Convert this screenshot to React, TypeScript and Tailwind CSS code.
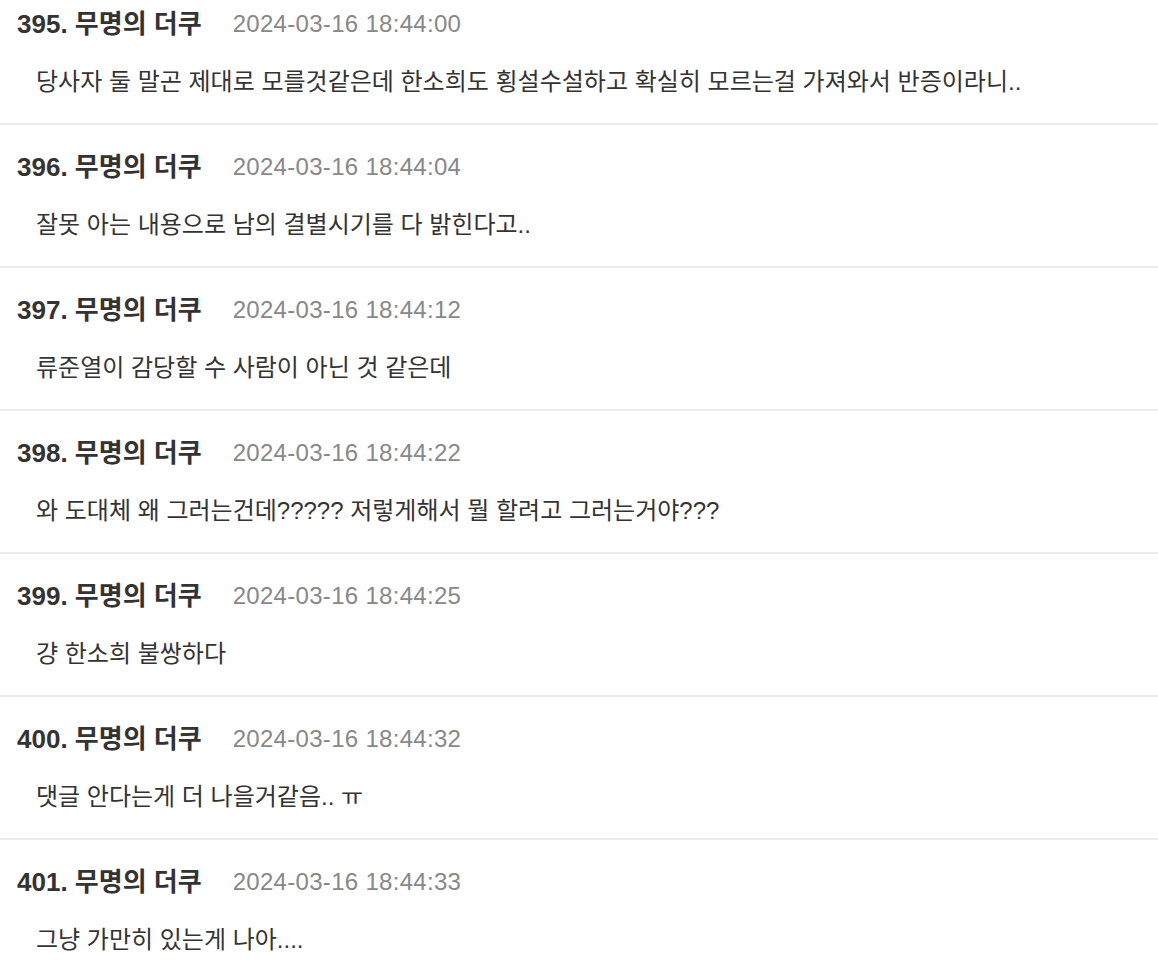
const comments = [
  { no: 395, time: '2024-03-16 18:44:00', body: '당사자 둘 말곤 제대로 모를것같은데 한소희도 횡설수설하고 확실히 모르는걸 가져와서 반증이라니..' },
  { no: 396, time: '2024-03-16 18:44:04', body: '잘못 아는 내용으로 남의 결별시기를 다 밝힌다고..' },
  { no: 397, time: '2024-03-16 18:44:12', body: '류준열이 감당할 수 사람이 아닌 것 같은데' },
  { no: 398, time: '2024-03-16 18:44:22', body: '와 도대체 왜 그러는건데????? 저렇게해서 뭘 할려고 그러는거야???' },
  { no: 399, time: '2024-03-16 18:44:25', body: '걍 한소희 불쌍하다' },
  { no: 400, time: '2024-03-16 18:44:32', body: '댓글 안다는게 더 나을거같음.. ㅠ' },
  { no: 401, time: '2024-03-16 18:44:33', body: '그냥 가만히 있는게 나아....' },
];

export default function App() {
  return (
    <div
      className="h-[974px] overflow-hidden bg-white"
      style={{ fontFamily: '"Liberation Sans", "Noto Sans CJK KR", sans-serif' }}
    >
      <ul className="-mt-[18px]">
        {comments.map((c) => (
          <li key={c.no} className="border-b-2 border-[#ececec] px-[17px] pt-[24px] pb-[23px]">
            <div className="flex items-center h-[36px]">
              <span className="text-[26px] font-bold text-[#333333]">
                {c.no}. 무명의 더쿠
              </span>
              <span className="ml-[31px] text-[24px] tracking-[0.3px] text-[#888888]">{c.time}</span>
            </div>
            <p className="mt-[22px] h-[36px] leading-[36px] pl-[19px] text-[24px] text-[#333333]">{c.body}</p>
          </li>
        ))}
      </ul>
    </div>
  );
}
